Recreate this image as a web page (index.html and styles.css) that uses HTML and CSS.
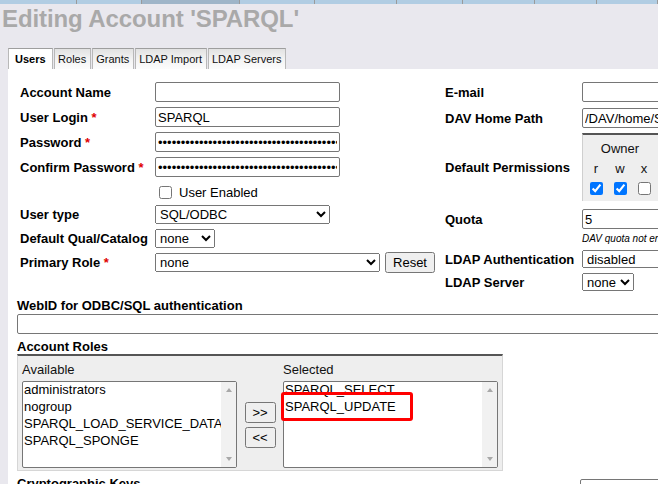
FILE: index.html
```html
<!DOCTYPE html>
<html>
<head>
<meta charset="utf-8">
<title>Editing Account</title>
<link rel="stylesheet" href="styles.css">
</head>
<body>
<div class="topbar">
  <span class="seg s1"></span><span class="seg s2"></span><span class="seg s3 dark"></span><span class="seg s4"></span><span class="seg s5"></span><span class="seg s6"></span><span class="seg s7"></span><span class="seg s8"></span><span class="seg s9"></span>
</div>
<h1 class="title">Editing Account 'SPARQL'</h1>
<div class="tabs">
  <div class="tab active">Users</div>
  <div class="tab">Roles</div>
  <div class="tab">Grants</div>
  <div class="tab">LDAP Import</div>
  <div class="tab">LDAP Servers</div>
</div>
<div class="panel">
  <div class="main">
    <div class="left">
      <div class="lbl">Account Name</div>
      <div class="val"><input class="txt w185" type="text" value=""></div>
      <div class="lbl">User Login <span class="req">*</span></div>
      <div class="val"><input class="txt w185" type="text" value="SPARQL"></div>
      <div class="lbl">Password <span class="req">*</span></div>
      <div class="val"><input class="txt w185" type="password" value="xxxxxxxxxxxxxxxxxxxxxxxxxxxxxxxxxxxxxxxxxxxxxxxxxxxxxxxxxxxx"></div>
      <div class="lbl">Confirm Password <span class="req">*</span></div>
      <div class="val"><input class="txt w185" type="password" value="xxxxxxxxxxxxxxxxxxxxxxxxxxxxxxxxxxxxxxxxxxxxxxxxxxxxxxxxxxxx"></div>
      <div></div>
      <div class="val chkrow"><label class="chk"><input type="checkbox">User Enabled</label></div>
      <div class="lbl">User type</div>
      <div class="val"><select class="sel w175"><option>SQL/ODBC</option></select></div>
      <div class="lbl">Default Qual/Catalog</div>
      <div class="val"><select class="sel w60"><option>none</option></select></div>
      <div class="lbl">Primary Role <span class="req">*</span></div>
      <div class="val"><select class="sel w225"><option>none</option></select><button class="btn reset" type="button">Reset</button></div>
    </div>
    <div class="right">
      <div class="rrow">
        <div class="rlbl">E-mail</div>
        <input class="txt w200" type="text" value="">
      </div>
      <div class="rrow mt6">
        <div class="rlbl">DAV Home Path</div>
        <input class="txt w200" type="text" value="/DAV/home/SPARQL/">
      </div>
      <div class="rrow mt5">
        <div class="rlbl">Default Permissions</div>
        <div class="perm">
          <div class="phead">Owner</div>
          <div class="gap"></div>
          <div class="phead">Group</div>
          <div class="gap"></div>
          <div class="phead">Other</div>
          <div>r</div><div>w</div><div>x</div><div class="gap"></div>
          <div>r</div><div>w</div><div>x</div><div class="gap"></div>
          <div>r</div><div>w</div><div>x</div>
          <input class="pc" type="checkbox" checked><input class="pc" type="checkbox" checked><input class="pc" type="checkbox"><div class="gap"></div>
          <input class="pc" type="checkbox" checked><input class="pc" type="checkbox"><input class="pc" type="checkbox"><div class="gap"></div>
          <input class="pc" type="checkbox"><input class="pc" type="checkbox"><input class="pc" type="checkbox">
        </div>
      </div>
      <div class="rrow mt8">
        <div class="rlbl">Quota</div>
        <input class="txt w200" type="text" value="5">
      </div>
      <div class="note">DAV quota not enabled</div>
      <div class="rrow mt4">
        <div class="rlbl">LDAP Authentication</div>
        <select class="sel h18 w150"><option>disabled</option></select>
      </div>
      <div class="rrow mt5">
        <div class="rlbl">LDAP Server</div>
        <select class="sel h18 w52"><option>none</option></select>
      </div>
    </div>
  </div>

  <div class="sect-lbl webid-lbl">WebID for ODBC/SQL authentication</div>
  <input class="txt webid" type="text" value="">

  <div class="sect-lbl roles-lbl">Account Roles</div>
  <div class="roles">
    <div class="rl">Available</div>
    <div></div>
    <div class="rl">Selected</div>
    <div class="list">
      <div class="items">
        <div>administrators</div>
        <div>nogroup</div>
        <div>SPARQL_LOAD_SERVICE_DATA</div>
        <div>SPARQL_SPONGE</div>
      </div>
      <div class="sbar"><span class="arr up"></span><span class="arr down"></span></div>
    </div>
    <div class="movebtns">
      <button class="btn mv" type="button">&gt;&gt;</button>
      <button class="btn mv" type="button">&lt;&lt;</button>
    </div>
    <div class="list">
      <div class="items">
        <div>SPARQL_SELECT</div>
        <div>SPARQL_UPDATE</div>
      </div>
      <div class="sbar"><span class="arr up"></span><span class="arr down"></span></div>
      <div class="hl"></div>
    </div>
  </div>

  <div class="crypto">
    <div class="sect-lbl">Cryptographic Keys</div>
    <input class="txt w200" type="text" value="">
  </div>
</div>
</body>
</html>
```

FILE: styles.css
```css
html, body {
  margin: 0;
  padding: 0;
  overflow: hidden;
}
body {
  width: 658px;
  height: 484px;
  background: #e9e8ee;
  font-family: "Liberation Sans", Arial, sans-serif;
  font-size: 13px;
  color: #000;
}
.topbar {
  display: flex;
  height: 4px;
  width: 1000px;
  background: #b1cde3;
}
.seg {
  flex: none;
  box-sizing: border-box;
  height: 4px;
  background: #b1cde3;
  border-right: 1px solid #9a9a9a;
}
.seg.dark { background: #9fb5c8; }
.s1 { width: 77px; }
.s2 { width: 65px; }
.s3 { width: 98px; }
.s4 { width: 75px; }
.s5 { width: 82px; }
.s6 { width: 66px; }
.s7 { width: 72px; }
.s8 { width: 62px; }
.s9 { width: 61px; }

.title {
  margin: 1px 0 0 2px;
  font-size: 24px;
  line-height: 28px;
  font-weight: bold;
  color: #a9a9a9;
  white-space: nowrap;
  letter-spacing: -0.1px;
}
.tabs {
  display: flex;
  gap: 1px;
  margin: 15px 0 0 8px;
  height: 21px;
}
.tab {
  box-sizing: border-box;
  height: 21px;
  padding: 0 3.5px;
  border: 1px solid #b8b8b8;
  border-bottom: none;
  border-top-color: #9e9e9e;
  background: linear-gradient(#e2e2e2, #f4f4f4 55%, #fcfcfc);
  font-size: 11px;
  line-height: 20px;
  color: #111;
}
.tab.active {
  background: #fff;
  font-weight: bold;
  padding: 0 6px;
  color: #000;
}
.panel {
  box-sizing: border-box;
  width: 1000px;
  height: 440px;
  margin-left: 8px;
  padding: 13px 0 0 9px;
  background: #fff;
}
.main {
  display: flex;
  align-items: flex-start;
  padding-left: 3px;
}
.left {
  display: grid;
  grid-template-columns: 135px 280px;
  grid-template-rows: 20px 20px 20px 20px 18px 19px 19px 19px;
  row-gap: 5px;
  align-items: center;
}
.lbl, .rlbl, .sect-lbl {
  font-weight: bold;
  white-space: nowrap;
}
.req { color: #e00000; }
.val {
  display: flex;
  align-items: center;
  height: 100%;
}
.val.chkrow { align-items: flex-end; }
.txt {
  font: 13px "Liberation Sans", Arial, sans-serif;
  height: 20px;
  box-sizing: border-box;
  margin: 0;
  padding: 1px 2px;
  border: 1px solid #767676;
  border-radius: 2px;
  background: #fff;
  color: #000;
}
.w185 { width: 185px; }
.w200 { width: 200px; }
.sel {
  font: 13px "Liberation Sans", Arial, sans-serif;
  height: 19px;
  box-sizing: border-box;
  margin: 0;
  color: #000;
}
.h18 { height: 18px; }
.w175 { width: 175px; }
.w60 { width: 60px; }
.w225 { width: 225px; }
.w150 { width: 150px; }
.w52 { width: 52px; }
.chk {
  display: flex;
  align-items: center;
  white-space: nowrap;
  line-height: 15px;
}
.chk input { margin: 0 7px 0 4px; }
.btn {
  font: 13px "Liberation Sans", Arial, sans-serif;
  margin: 0;
  color: #000;
}
.reset {
  flex: none;
  width: 50px;
  height: 21px;
  margin-left: 5px;
  padding: 0;
}
.right {
  display: flex;
  flex-direction: column;
  margin-left: 10px;
}
.rrow {
  display: flex;
  align-items: center;
}
.rlbl {
  width: 137px;
  flex: none;
}
.mt4 { margin-top: 4px; }
.mt5 { margin-top: 5px; }
.mt6 { margin-top: 6px; }
.mt8 { margin-top: 8px; }
.perm {
  box-sizing: border-box;
  width: 240px;
  height: 68px;
  padding: 3px 0 3px 1px;
  border-top: 2px solid #555;
  border-left: 1px solid #cfcfcf;
  background: #eee;
  display: grid;
  grid-template-columns: repeat(3, 24px) 12px repeat(3, 24px) 12px repeat(3, 24px);
  grid-auto-rows: 20px;
  align-items: center;
  justify-items: center;
  line-height: 15px;
  color: #111;
}
.phead { grid-column: span 3; }
.pc { margin: 0; width: 13px; height: 13px; }
.note {
  margin: 3px 0 0 137px;
  font-size: 10px;
  font-style: italic;
  line-height: 14px;
  white-space: nowrap;
}
.sect-lbl { line-height: 15px; }
.webid-lbl { margin-top: 7px; }
.webid {
  width: 900px;
  margin-top: 1px;
  display: block;
}
.roles-lbl { margin-top: 5px; }
.roles {
  box-sizing: border-box;
  width: 486px;
  padding: 6px 4px 2px;
  background: #eee;
  border: 1px solid #d6d6d6;
  border-top: 2px solid #555;
  display: grid;
  grid-template-columns: 215px 46px 215px;
  grid-template-rows: 15px 87px;
  row-gap: 4px;
}
.rl {
  line-height: 15px;
  color: #111;
}
.list {
  position: relative;
  display: flex;
  box-sizing: border-box;
  height: 87px;
  border: 1px solid #767676;
  border-radius: 2px;
  background: #fff;
}
.items {
  flex: 1;
  min-width: 0;
  overflow: hidden;
  padding: 0 1px;
  margin-top: -1px;
  line-height: 17px;
  white-space: nowrap;
}
.sbar {
  flex: none;
  width: 15px;
  background: #f1f1f1;
  display: flex;
  flex-direction: column;
  justify-content: space-between;
  align-items: center;
}
.arr {
  display: block;
  width: 0;
  height: 0;
  border-left: 3.5px solid transparent;
  border-right: 3.5px solid transparent;
}
.arr.up {
  margin-top: 6px;
  border-bottom: 4px solid #a8a8a8;
}
.arr.down {
  margin-bottom: 6px;
  border-top: 4px solid #a8a8a8;
}
.movebtns {
  display: flex;
  flex-direction: column;
  align-items: center;
  justify-content: center;
  gap: 4px;
}
.mv {
  width: 31px;
  height: 21px;
  padding: 0;
}
.hl {
  position: absolute;
  left: -3px;
  top: 10px;
  width: 132px;
  height: 29px;
  box-sizing: border-box;
  border: 3px solid #f00;
  border-radius: 3px;
}
.crypto {
  display: flex;
  align-items: flex-start;
  margin-top: 5px;
}
.crypto .sect-lbl { width: 563px; flex: none; }
.crypto .txt { margin-top: 3px; }
```
